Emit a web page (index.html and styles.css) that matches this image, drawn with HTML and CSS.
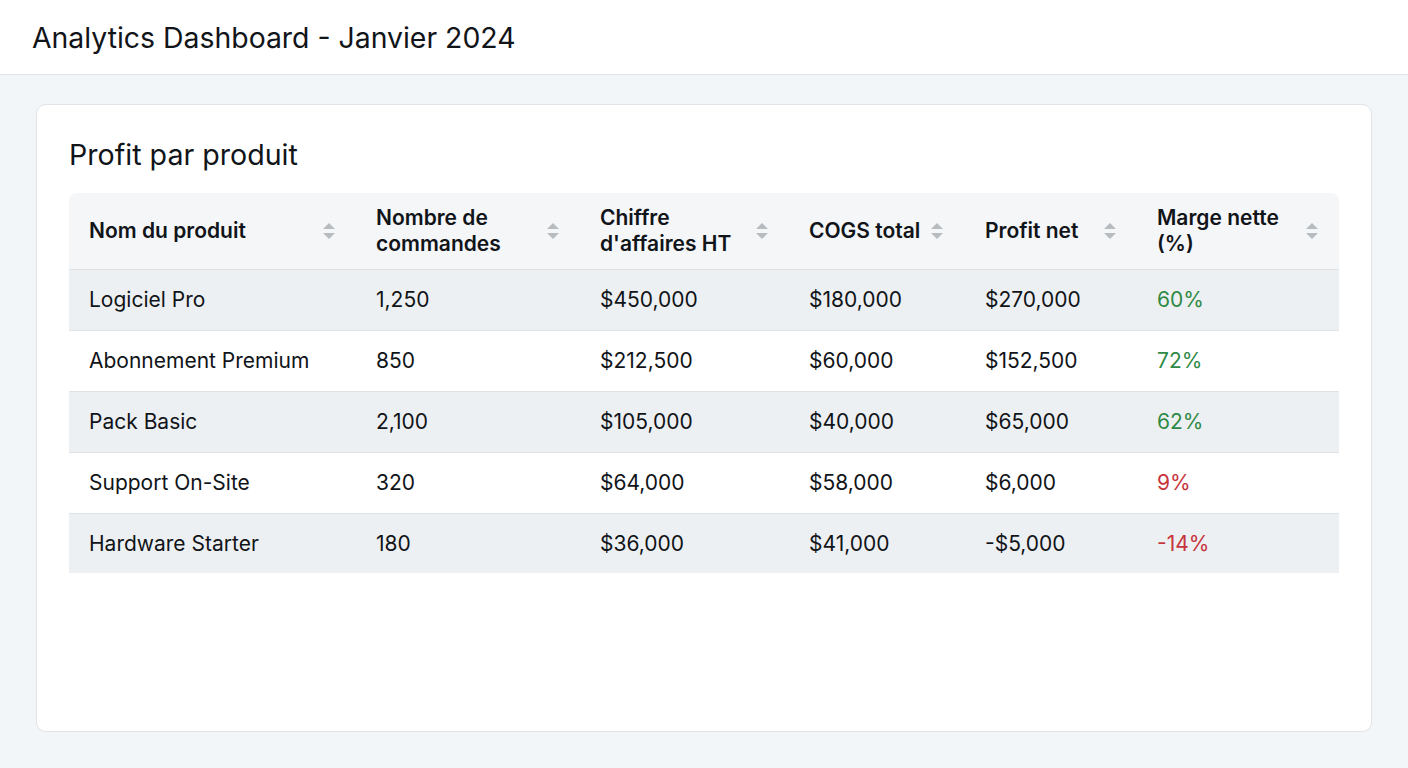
FILE: index.html
```html
<!DOCTYPE html>
<html lang="fr">
<head>
<meta charset="utf-8">
<title>Analytics Dashboard - Janvier 2024</title>
<link rel="stylesheet" href="styles.css">
</head>
<body>
<div class="page">
  <header class="topbar">
    <h1 class="topbar-title">Analytics Dashboard - Janvier 2024</h1>
  </header>
  <main class="main">
    <section class="card">
      <h2 class="card-title">Profit par produit</h2>
      <table class="data-table">
        <colgroup>
          <col class="c1"><col class="c2"><col class="c3"><col class="c4"><col class="c5"><col class="c6">
        </colgroup>
        <thead>
          <tr>
            <th><div class="th-inner"><span>Nom du produit</span><span class="sort"></span></div></th>
            <th><div class="th-inner"><span>Nombre de<br>commandes</span><span class="sort"></span></div></th>
            <th><div class="th-inner"><span>Chiffre<br>d'affaires HT</span><span class="sort"></span></div></th>
            <th><div class="th-inner tight"><span>COGS total</span><span class="sort"></span></div></th>
            <th><div class="th-inner"><span>Profit net</span><span class="sort"></span></div></th>
            <th><div class="th-inner"><span>Marge nette<br>(%)</span><span class="sort"></span></div></th>
          </tr>
        </thead>
        <tbody>
          <tr><td>Logiciel Pro</td><td>1,250</td><td>$450,000</td><td>$180,000</td><td>$270,000</td><td class="pos">60%</td></tr>
          <tr><td>Abonnement Premium</td><td>850</td><td>$212,500</td><td>$60,000</td><td>$152,500</td><td class="pos">72%</td></tr>
          <tr><td>Pack Basic</td><td>2,100</td><td>$105,000</td><td>$40,000</td><td>$65,000</td><td class="pos">62%</td></tr>
          <tr><td>Support On-Site</td><td>320</td><td>$64,000</td><td>$58,000</td><td>$6,000</td><td class="neg">9%</td></tr>
          <tr><td>Hardware Starter</td><td>180</td><td>$36,000</td><td>$41,000</td><td>-$5,000</td><td class="neg">-14%</td></tr>
        </tbody>
      </table>
    </section>
  </main>
</div>
</body>
</html>
```

FILE: styles.css
```css
* { box-sizing: border-box; }
html, body { margin: 0; padding: 0; }
body {
  font-family: Inter, "Noto Sans", "Liberation Sans", sans-serif;
  color: #111418;
  background: #f3f6f8;
}
.page {
  height: 100vh;
  display: flex;
  flex-direction: column;
}
.topbar {
  background: #ffffff;
  border-bottom: 1px solid #dde3e8;
  height: 75px;
  display: flex;
  align-items: center;
  padding: 0 32px;
  flex: none;
}
.topbar-title {
  margin: 0;
  font-size: 28.4px;
  font-weight: 400;
  color: #111418;
}
.main {
  flex: 1;
  padding: 29px 36px 36px;
  display: flex;
  min-height: 0;
}
.card {
  flex: 1;
  background: #ffffff;
  border: 1px solid #e0e4e8;
  border-radius: 10px;
  padding: 32px 32px;
}
.card-title {
  margin: 0 0 20px;
  font-size: 28.6px;
  line-height: 36px;
  font-weight: 400;
  color: #111418;
}
.data-table {
  width: 100%;
  border-collapse: separate;
  border-spacing: 0;
  table-layout: fixed;
  font-size: 21px;
}
.c1 { width: 287px; }
.c2 { width: 224px; }
.c3 { width: 209px; }
.c4 { width: 176px; }
.c5 { width: 172px; }
.c6 { width: 202px; }
.data-table th {
  background: #f4f6f8;
  text-align: left;
  font-weight: 600;
  font-size: 21px;
  line-height: 26px;
  height: 77px;
  padding: 0 20px;
  border-bottom: 1px solid #dfe3e6;
  color: #111418;
}
.data-table th:first-child { border-top-left-radius: 8px; }
.data-table th:last-child { border-top-right-radius: 8px; }
.th-inner {
  display: flex;
  align-items: center;
  justify-content: space-between;
  gap: 10px;
}
.th-inner.tight { justify-content: flex-start; }
.data-table th:nth-child(4) { padding-right: 12px; }
.sort {
  flex: none;
  width: 14px;
  height: 18px;
  position: relative;
}
.sort::before, .sort::after {
  content: "";
  position: absolute;
  left: 1px;
  border-left: 6px solid transparent;
  border-right: 6px solid transparent;
}
.sort::before {
  top: 1px;
  border-bottom: 6px solid #b7bcc1;
}
.sort::after {
  bottom: 1px;
  border-top: 6px solid #b7bcc1;
}
.data-table td {
  height: 61px;
  padding: 0 20px;
  line-height: 24px;
  border-bottom: 1px solid #dfe3e6;
  color: #111418;
  white-space: nowrap;
}
.data-table tbody tr:nth-child(odd) td { background: #edf0f2; }
.data-table tbody tr:nth-child(even) td { background: #ffffff; }
.data-table tbody tr:last-child td { border-bottom: none; height: 59px; }
.pos { color: #2f8a45 !important; }
.neg { color: #c7343c !important; }
```
